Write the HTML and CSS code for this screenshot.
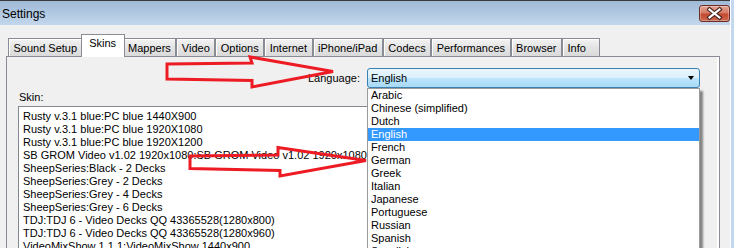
FILE: index.html
```html
<!DOCTYPE html>
<html lang="en">
<head>
    <meta charset="UTF-8">
    <title>Settings</title>
    <link rel="stylesheet" href="styles.css">
</head>
<body>

<div class="window">
    <div class="titlebar">
        <span class="title">Settings</span>
        <button class="close">
            <svg width="29" height="15" viewBox="0 0 29 15">
                <path d="M9.5 3.5 L19.5 11.5 M19.5 3.5 L9.5 11.5" stroke="#4a2420" stroke-width="4.4" stroke-linecap="square"/>
                <path d="M9.5 3.5 L19.5 11.5 M19.5 3.5 L9.5 11.5" stroke="#fff" stroke-width="2.2" stroke-linecap="square"/>
            </svg>
        </button>
    </div>

    <div class="client">
        <div class="tabs">
            <div class="tab">Sound Setup</div>
            <div class="tab active">Skins</div>
            <div class="tab">Mappers</div>
            <div class="tab">Video</div>
            <div class="tab">Options</div>
            <div class="tab">Internet</div>
            <div class="tab">iPhone/iPad</div>
            <div class="tab">Codecs</div>
            <div class="tab">Performances</div>
            <div class="tab">Browser</div>
            <div class="tab info">Info</div>
        </div>

        <div class="panel">
            <div class="lang-row">
                <label>Language:</label>
                <div class="combo">
                    <span>English</span>
                    <span class="caret"></span>
                    <!-- open dropdown -->
                    <ul class="dropdown">
                        <li>Arabic</li>
                        <li>Chinese (simplified)</li>
                        <li>Dutch</li>
                        <li class="selected">English</li>
                        <li>French</li>
                        <li>German</li>
                        <li>Greek</li>
                        <li>Italian</li>
                        <li>Japanese</li>
                        <li>Portuguese</li>
                        <li>Russian</li>
                        <li>Spanish</li>
                        <li>Swedish</li>
                    </ul>
                </div>
            </div>

            <div class="skin-label">Skin:</div>
            <ul class="skin-list">
                <li>Rusty v.3.1 blue:PC blue 1440X900</li>
                <li>Rusty v.3.1 blue:PC blue 1920X1080</li>
                <li>Rusty v.3.1 blue:PC blue 1920X1200</li>
                <li>SB GROM Video v1.02 1920x1080:SB GROM Video v1.02 1920x1080</li>
                <li>SheepSeries:Black - 2 Decks</li>
                <li>SheepSeries:Grey - 2 Decks</li>
                <li>SheepSeries:Grey - 4 Decks</li>
                <li>SheepSeries:Grey - 6 Decks</li>
                <li>TDJ:TDJ 6 - Video Decks QQ 43365528(1280x800)</li>
                <li>TDJ:TDJ 6 - Video Decks QQ 43365528(1280x960)</li>
                <li>VideoMixShow 1.1.1:VideoMixShow 1440x900</li>
            </ul>
        </div>
    </div>

    <!-- red arrows drawn on the screenshot -->
    <svg class="marks" width="734" height="248" viewBox="0 0 734 248">
        <polygon points="167,64 252,63 250,57 333,71.5 252,87 252,80.5 167,79" />
        <polygon points="190,156 278,155 278,147.5 366,160.5 280,176 280,170.5 190,168.5" />
    </svg>
</div>

</body>
</html>
```

FILE: styles.css
```css
body {
    margin: 0;
    background-color: #c3d8ee;
    font-family: "Liberation Sans", Arial, sans-serif;
    font-size: 11px;
    color: #000;
}
.window {
    position: relative;
    width: 730px;
    height: 248px;
    overflow: hidden;
    background-color: #f0f0f0;
    border-right: 1px solid #fff;
}
.titlebar {
    height: 25px;
    box-sizing: border-box;
    border-top: 1px solid #3a3a3a;
    background: linear-gradient(#9fb9d7, #c2d7ec);
    display: flex;
    align-items: flex-start;
    justify-content: space-between;
    padding-left: 2px;
}
.title {
    font-size: 12px;
    line-height: 14px;
    margin-top: 6px;
}
.close {
    width: 31px;
    height: 17px;
    margin-top: 4px;
    padding: 0;
    border: 1px solid #6b2e26;
    border-radius: 3px;
    background: linear-gradient(#e6a696 0%, #d57a66 45%, #c4492f 55%, #cc6a50 100%);
    box-shadow: inset 0 0 0 1px rgba(255,255,255,0.3);
    display: flex;
    align-items: center;
    justify-content: center;
}
.close svg {
    display: block;
}
/* Tabs */
.client {
    padding-top: 9px;
}
.tabs {
    display: flex;
    align-items: flex-end;
    height: 22px;
    padding-left: 8px;
}
.tab {
    height: 18px;
    box-sizing: border-box;
    padding: 0 4.5px;
    border: 1px solid #898c95;
    border-bottom: none;
    background: linear-gradient(#f3f3f3, #e4e4e4 50%, #dadada 100%);
    box-shadow: inset 1px 1px 0 #fff;
    display: flex;
    align-items: center;
    white-space: nowrap;
}
.tab.active {
    position: relative;
    z-index: 1;
    height: 23px;
    margin: 0 -2px -1px;
    padding: 2px 7.5px 0;
    align-items: flex-start;
    line-height: 13px;
    background: #fff;
    box-shadow: none;
}
.tab.info {
    min-width: 38px;
    box-sizing: border-box;
}
.panel {
    margin-left: 6px;
    width: 714px;
    height: 200px;
    box-sizing: border-box;
    border: 1px solid #898c95;
    border-bottom: none;
    box-shadow: inset -2px 0 0 #fff;
    padding: 11px 19px 0 11px;
}
/* Language combo */
.lang-row {
    display: flex;
    justify-content: flex-end;
    align-items: center;
    gap: 7px;
    height: 20px;
}
.combo {
    position: relative;
    width: 333px;
    height: 20px;
    box-sizing: border-box;
    border: 1px solid #3c7fb1;
    border-radius: 3px;
    background: linear-gradient(#eaf6fd 0%, #d9f0fc 50%, #bee6fd 50%, #a7d9f5 100%);
    display: flex;
    align-items: center;
    justify-content: space-between;
    padding: 0 5px 0 3px;
}
.caret {
    width: 0;
    height: 0;
    border-left: 3.5px solid transparent;
    border-right: 3.5px solid transparent;
    border-top: 4px solid #000;
}
.dropdown {
    position: absolute;
    top: 19px;
    left: -1px;
    width: 333px;
    box-sizing: border-box;
    margin: 0;
    padding: 0;
    list-style: none;
    background-color: #fff;
    border: 1px solid #9a9a9a;
    box-shadow: 3px 3px 2px rgba(0,0,0,0.45);
    z-index: 2;
}
.dropdown li {
    line-height: 13px;
    padding-left: 3px;
}
.dropdown li.selected {
    background-color: #3399ff;
    color: #fff;
}
/* Skin list */
.skin-label {
    margin-top: 3px;
    line-height: 13px;
    padding-left: 1px;
}
.skin-list {
    margin: 2px 0 0;
    padding: 3px 0 0 4px;
    list-style: none;
    height: 160px;
    background-color: #fff;
    border: 1px solid #828790;
    white-space: nowrap;
    overflow: hidden;
}
.skin-list li {
    line-height: 13px;
}
.marks {
    position: absolute;
    top: 0;
    left: 0;
    z-index: 5;
    pointer-events: none;
}
.marks polygon {
    fill: none;
    stroke: #ed1c24;
    stroke-width: 3;
}
```
